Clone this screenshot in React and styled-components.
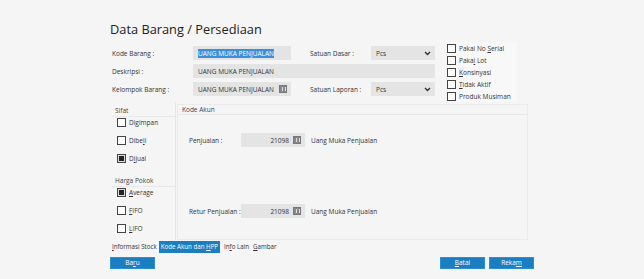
import React from "react";
import styled, { createGlobalStyle } from "styled-components";

const GlobalStyle = createGlobalStyle`
  html, body {
    margin: 0;
    padding: 0;
    background: #f5f5f5;
    font-family: "Open Sans", "Noto Sans", sans-serif;
    color: #333;
  }
`;

const Page = styled.div`
  width: 644px;
  height: 279px;
  padding: 21px 0 0 110px;
  box-sizing: border-box;
`;

const Title = styled.h1`
  margin: 0 0 8px;
  font-size: 12.8px;
  font-weight: 400;
  color: #222;
  line-height: 17px;
`;

const Top = styled.div`
  display: flex;
  align-items: flex-start;
  height: 56px;
`;

const Fields = styled.div`
  display: flex;
  flex-flow: column;
  gap: 4px;
  padding-left: 2px;
  width: 324px;
`;

const Row = styled.div`
  display: flex;
  align-items: center;
  height: 14px;
`;

const Label = styled.span`
  font-size: 6.5px;
  width: ${(p) => p.$w}px;
  padding-left: ${(p) => p.$pl || 0}px;
  flex-shrink: 0;
  color: #333;
`;

const Input = styled.div`
  width: ${(p) => p.$w}px;
  height: 14px;
  background: #e4e4e4;
  display: flex;
  align-items: center;
  justify-content: ${(p) => (p.$right ? "flex-end" : "space-between")};
  gap: 4px;
  padding: 0 4px 0 5px;
  box-sizing: border-box;
  font-size: 6.5px;
  color: #333;
  flex-shrink: 0;
`;

const Selected = styled.span`
  background: #3b8fd9;
  color: #fff;
`;

const Chevron = () => (
  <svg width="7" height="5" viewBox="0 0 7 5">
    <path d="M1 1 L3.5 3.5 L6 1" fill="none" stroke="#333" strokeWidth="1.4" />
  </svg>
);

const PickIcon = styled.span`
  width: 8px;
  height: 8px;
  background: #888;
  border: 1px solid #777;
  box-sizing: border-box;
  position: relative;
  flex-shrink: 0;
  &::after {
    content: "";
    position: absolute;
    left: 2px;
    top: 1px;
    width: 2px;
    height: 4px;
    border-left: 1px solid #ddd;
    border-right: 1px solid #ddd;
  }
`;

const Checks = styled.div`
  display: flex;
  flex-flow: column;
  margin-left: 11px;
  margin-top: -4px;
  padding: 0 6px 0 0;
  background: #f8f8f8;
`;

const CheckRow = styled.label`
  display: flex;
  align-items: center;
  gap: 3px;
  height: 12px;
  font-size: 6.5px;
  color: #333;
  white-space: nowrap;
`;

const Box = styled.span`
  width: 9px;
  height: 9px;
  border: 1px solid #444;
  box-sizing: border-box;
  background: ${(p) => (p.$on ? "#ddd" : "#fff")};
  display: flex;
  align-items: center;
  justify-content: center;
  flex-shrink: 0;
  &::after {
    content: "";
    display: ${(p) => (p.$on ? "block" : "none")};
    width: 5px;
    height: 5px;
    background: #222;
  }
`;

const Panels = styled.div`
  display: flex;
  gap: 1px;
  margin-left: 2px;
  height: 138px;
`;

const Side = styled.div`
  width: 64px;
  display: flex;
  flex-flow: column;
  padding-top: 4px;
  box-sizing: border-box;
  border-right: 1px solid #e6e6e6;
`;

const Group = styled.div`
  display: flex;
  flex-flow: column;
  height: ${(p) => p.$h}px;
  flex-shrink: 0;
`;

const GroupHead = styled.div`
  font-size: 6.5px;
  height: 10px;
  line-height: 10px;
  padding-left: 3px;
  color: #444;
  border-bottom: 1px solid #e8e8e8;
  margin-bottom: -4px;
`;

const SideItem = styled(CheckRow)`
  height: 18px;
  padding-left: 5px;
`;

const Main = styled.div`
  width: 349px;
  margin-top: 2px;
  height: 134px;
  border: 1px solid #ebebeb;
  display: flex;
  flex-flow: column;
`;

const MainHead = styled.div`
  font-size: 6.5px;
  height: 9px;
  line-height: 9px;
  padding-left: 4px;
  color: #444;
  border-bottom: 1px solid #e8e8e8;
`;

const MainBody = styled.div`
  flex: 1;
  display: flex;
  flex-flow: column;
  justify-content: space-between;
  padding: 18px 0 21px 11px;
`;

const AccountName = styled.span`
  font-size: 6.5px;
  margin-left: 6px;
  color: #333;
`;

const Tabs = styled.div`
  display: flex;
  align-items: center;
  height: 12px;
  margin-top: 1px;
  margin-left: 2px;
  gap: 4px;
`;

const Tab = styled.span`
  font-size: 6.2px;
  height: 12px;
  line-height: 12px;
  padding: 0 ${(p) => (p.$active ? 2 : 0)}px;
  margin-left: ${(p) => (p.$active ? -2 : 0)}px;
  background: ${(p) => (p.$active ? "#1a7ec0" : "transparent")};
  color: ${(p) => (p.$active ? "#fff" : "#333")};
`;

const Buttons = styled.div`
  display: flex;
  align-items: center;
  margin-top: 4px;
  width: 424px;
`;

const Button = styled.button`
  width: 45px;
  height: 12px;
  padding: 0;
  border: 1px solid #2b8fcf;
  background: #1a7ec0;
  color: #fff;
  font-family: inherit;
  font-size: 6.5px;
  line-height: 10px;
  margin-left: ${(p) => p.$ml || 0}px;
`;

const Key = styled.u`
  text-decoration: underline;
`;

export default function App() {
  return (
    <Page>
      <GlobalStyle />
      <Title>Data Barang / Persediaan</Title>
      <Top>
        <Fields>
          <Row>
            <Label $w={81}>Kode Barang :</Label>
            <Input $w={98}>
              <Selected>UANG MUKA PENJUALAN</Selected>
            </Input>
            <Label $w={61} $pl={19}>Satuan Dasar :</Label>
            <Input $w={64}>
              <span>Pcs</span> <Chevron />
            </Input>
          </Row>
          <Row>
            <Label $w={81}>Deskripsi :</Label>
            <Input $w={242}>UANG MUKA PENJUALAN</Input>
          </Row>
          <Row>
            <Label $w={81}>Kelompok Barang :</Label>
            <Input $w={98}>
              <span>UANG MUKA PENJUALAN</span> <PickIcon />
            </Input>
            <Label $w={61} $pl={19}>Satuan Laporan :</Label>
            <Input $w={64}>
              <span>Pcs</span> <Chevron />
            </Input>
          </Row>
        </Fields>
        <Checks>
          <CheckRow><Box /><span>Pakai No <Key>S</Key>erial</span></CheckRow>
          <CheckRow><Box /><span>Paka<Key>i</Key> Lot</span></CheckRow>
          <CheckRow><Box /><span><Key>K</Key>onsinyasi</span></CheckRow>
          <CheckRow><Box /><span><Key>T</Key>idak Aktif</span></CheckRow>
          <CheckRow><Box /><span>Produk Musiman</span></CheckRow>
        </Checks>
      </Top>
      <Panels>
        <Side>
          <Group $h={70}>
            <GroupHead>Sifat</GroupHead>
            <SideItem><Box /><span>Di<Key>g</Key>impan</span></SideItem>
            <SideItem><Box /><span>Dibe<Key>l</Key>i</span></SideItem>
            <SideItem><Box $on /><span>D<Key>i</Key>jual</span></SideItem>
          </Group>
          <Group $h={63}>
            <GroupHead>Harga Pokok</GroupHead>
            <SideItem><Box $on /><span><Key>A</Key>verage</span></SideItem>
            <SideItem><Box /><span><Key>F</Key>IFO</span></SideItem>
            <SideItem><Box /><span><Key>L</Key>IFO</span></SideItem>
          </Group>
        </Side>
        <Main>
          <MainHead>Kode Akun</MainHead>
          <MainBody>
            <Row>
              <Label $w={52}>Penjualan :</Label>
              <Input $w={64} $right>
                <span>21098</span> <PickIcon />
              </Input>
              <AccountName>Uang Muka Penjualan</AccountName>
            </Row>
            <Row>
              <Label $w={52}>Retur Penjualan :</Label>
              <Input $w={64} $right>
                <span>21098</span> <PickIcon />
              </Input>
              <AccountName>Uang Muka Penjualan</AccountName>
            </Row>
          </MainBody>
        </Main>
      </Panels>
      <Tabs>
        <Tab><Key>I</Key>nformasi Stock</Tab>
        <Tab $active>Kode Akun dan <Key>H</Key>PP</Tab>
        <Tab>In<Key>f</Key>o Lain</Tab>
        <Tab><Key>G</Key>ambar</Tab>
      </Tabs>
      <Buttons>
        <Button>Ba<Key>r</Key>u</Button>
        <Button $ml={285}><Key>B</Key>atal</Button>
        <Button $ml={4}>Reka<Key>m</Key></Button>
      </Buttons>
    </Page>
  );
}
